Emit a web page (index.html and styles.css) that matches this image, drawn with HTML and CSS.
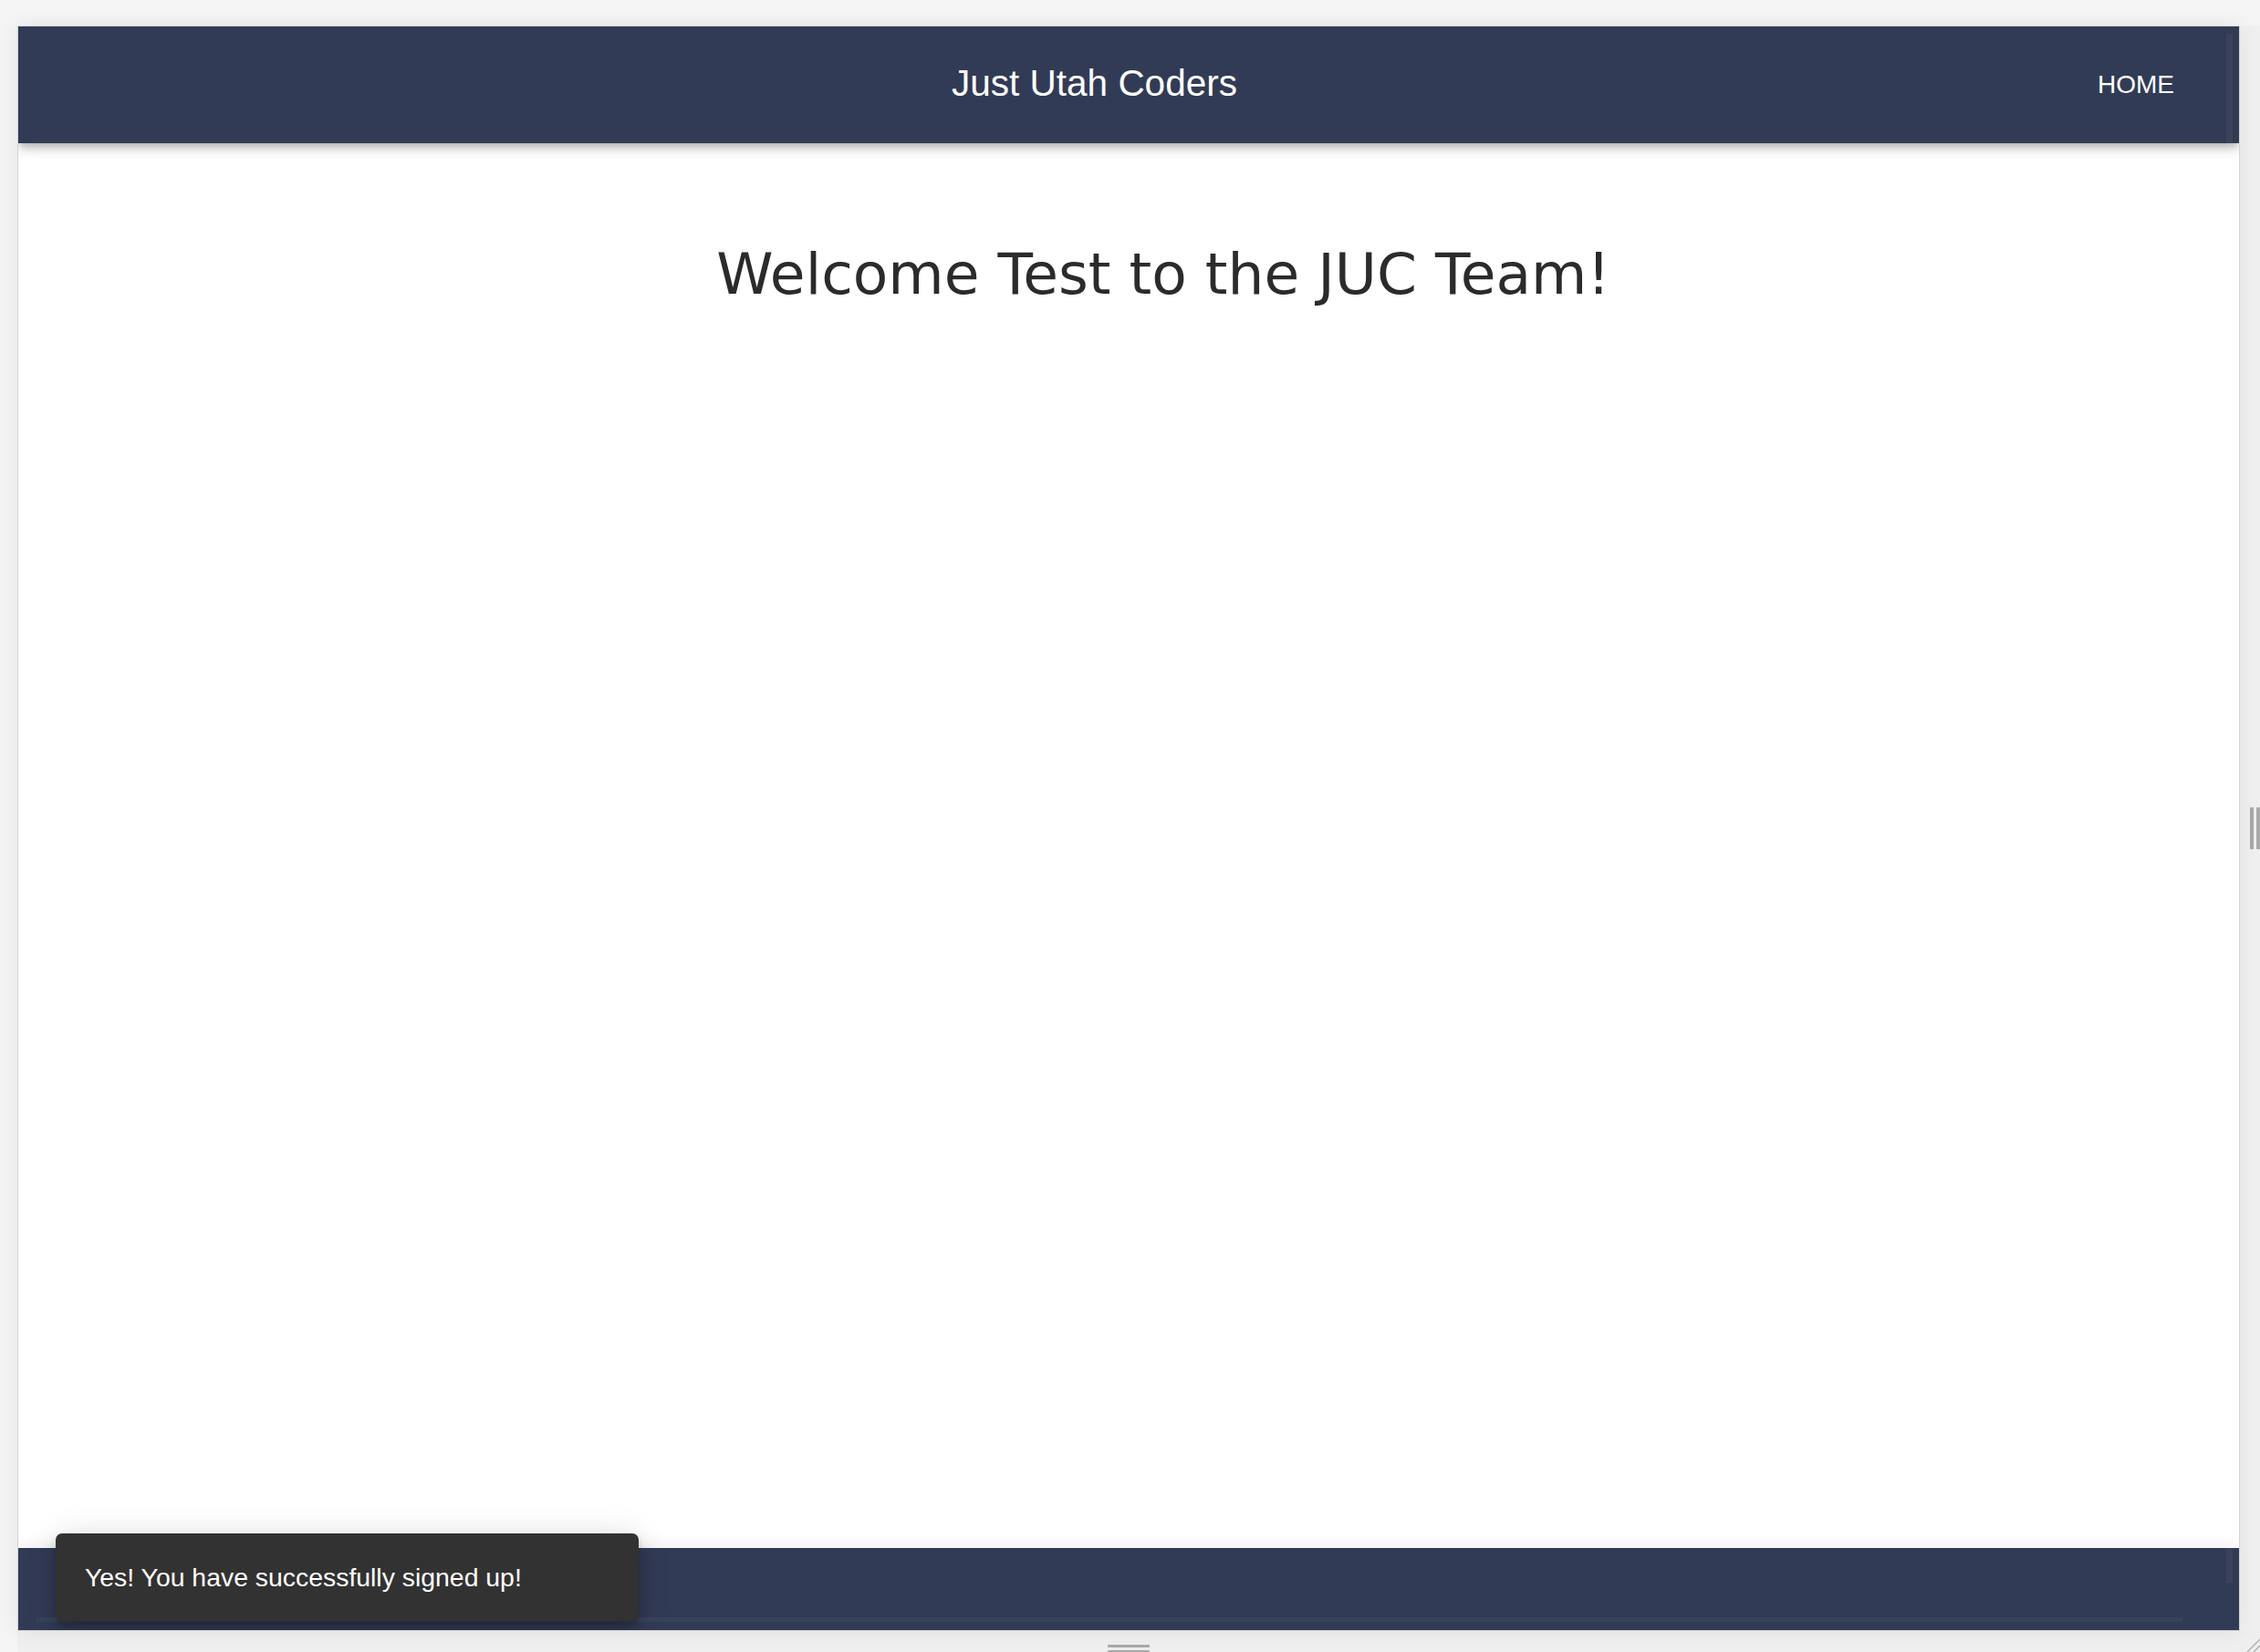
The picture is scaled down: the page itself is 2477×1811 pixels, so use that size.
FILE: index.html
```html
<!DOCTYPE html>
<html lang="en">
<head>
<meta charset="utf-8">
<title>Just Utah Coders</title>
<link rel="stylesheet" href="styles.css">
</head>
<body>
<div class="workspace">
  <div class="frame">
    <header class="toolbar">
      <div class="toolbar-title">Just Utah Coders</div>
      <a class="nav-link">HOME</a>
    </header>
    <main class="content">
      <h1 class="welcome">Welcome Test to the JUC Team!</h1>
    </main>
    <footer class="footer"></footer>
    <div class="vscroll"></div>
    <div class="hscroll"></div>
    <div class="snackbar">Yes! You have successfully signed up!</div>
  </div>
  <div class="side-handle"><span class="vbar"></span><span class="vbar"></span></div>
  <div class="bottom-handle"><span class="hbar"></span><span class="hbar"></span></div>
  <div class="corner-handle">
    <svg width="22" height="23" viewBox="0 0 22 23"><line x1="8" y1="23" x2="22" y2="9" stroke="#b0b0b0" stroke-width="1.5"/><line x1="15" y1="23" x2="22" y2="16" stroke="#b0b0b0" stroke-width="1.5"/></svg>
  </div>
</div>
</body>
</html>
```

FILE: styles.css
```css
html, body {
  margin: 0;
  padding: 0;
}
body {
  width: 2477px;
  height: 1811px;
  overflow: hidden;
  background: #f5f5f5;
  font-family: "Liberation Sans", Arial, sans-serif;
}
.workspace {
  display: grid;
  grid-template-columns: 19px 2436px 22px;
  grid-template-rows: 28px 1760px 23px;
  width: 2477px;
  height: 1811px;
}
.frame {
  grid-column: 2;
  grid-row: 2;
  position: relative;
  display: flex;
  flex-direction: column;
  border: 1px solid #d4d4d4;
  background: #ffffff;
  box-shadow: 0 0 24px rgba(0, 0, 0, 0.07);
  overflow: hidden;
}
.toolbar {
  position: relative;
  z-index: 2;
  height: 128px;
  flex: 0 0 128px;
  display: flex;
  align-items: center;
  padding: 0 55px 0 96px;
  background: #323b55;
  color: #ffffff;
  box-shadow: 0 4px 8px -2px rgba(0, 0, 0, 0.2), 0 8px 10px 0 rgba(0, 0, 0, 0.1), 0 2px 20px 0 rgba(0, 0, 0, 0.1);
}
.toolbar-title {
  flex: 1;
  text-align: center;
  font-size: 40.5px;
  line-height: 48px;
  margin-top: -4px;
}
.nav-link {
  padding: 0 16px;
  font-size: 28px;
  line-height: 40px;
  color: #ffffff;
}
.content {
  flex: 1;
  padding-left: 76px;
  text-align: center;
}
.welcome {
  margin: 107px 0 0;
  font-family: "DejaVu Sans", Verdana, sans-serif;
  font-weight: 400;
  font-size: 63px;
  line-height: normal;
  color: #2b2b2b;
}
.footer {
  position: relative;
  z-index: 2;
  flex: 0 0 90px;
  height: 90px;
  background: #323b55;
  box-shadow: 0 -4px 16px rgba(0, 0, 0, 0.06);
}
.vscroll {
  position: absolute;
  z-index: 3;
  top: 8px;
  right: 7px;
  width: 7px;
  height: 1698px;
  background: rgba(255, 255, 255, 0.04);
}
.hscroll {
  position: absolute;
  z-index: 3;
  left: 20px;
  bottom: 9px;
  width: 2352px;
  height: 5px;
  background: rgba(255, 255, 255, 0.04);
}
.snackbar {
  position: absolute;
  z-index: 5;
  left: 41px;
  bottom: 10px;
  width: 639px;
  height: 96px;
  box-sizing: border-box;
  display: flex;
  align-items: center;
  padding: 0 32px;
  border-radius: 7px;
  background: #323232;
  color: #ffffff;
  font-size: 28.4px;
  box-shadow: 0 6px 10px -2px rgba(0, 0, 0, 0.2), 0 12px 20px 0 rgba(0, 0, 0, 0.14), 0 2px 36px 0 rgba(0, 0, 0, 0.12);
}
.side-handle {
  grid-column: 3;
  grid-row: 2;
  display: flex;
  align-items: center;
  gap: 3px;
  padding-left: 11px;
  background: #f0f0f0;
}
.vbar {
  width: 4px;
  height: 46px;
  background: #a9a9a9;
  border-radius: 1px;
}
.bottom-handle {
  grid-column: 2;
  grid-row: 3;
  display: flex;
  flex-direction: column;
  align-items: center;
  gap: 3px;
  padding-top: 15px;
  background: #efefef;
}
.hbar {
  width: 46px;
  height: 3px;
  background: #a9a9a9;
  border-radius: 1px;
}
.corner-handle {
  grid-column: 3;
  grid-row: 3;
  background: #efefef;
  display: flex;
  align-items: flex-end;
  justify-content: flex-end;
}
.corner-handle svg {
  display: block;
}
```
